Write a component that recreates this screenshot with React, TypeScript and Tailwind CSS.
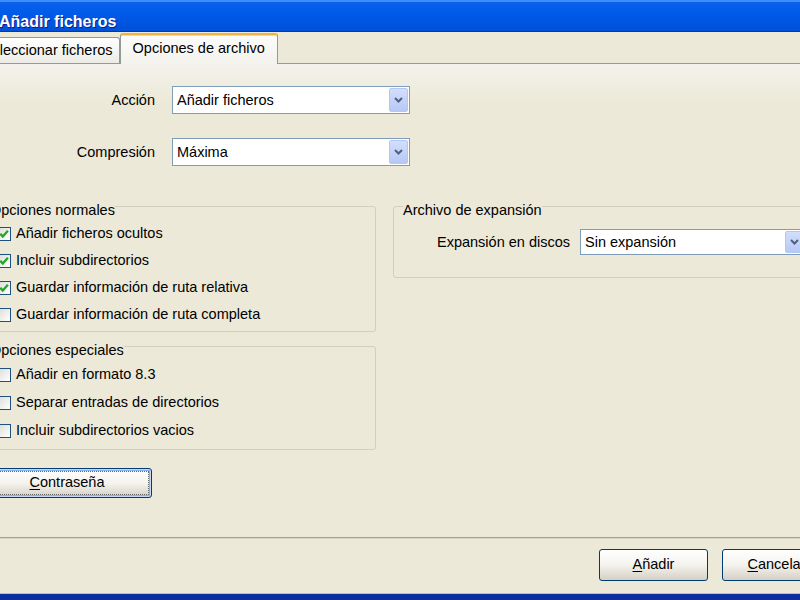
import React from 'react';

function Chevron() {
  return (
    <svg width="9" height="6" viewBox="0 0 9 6">
      <path d="M1 1l3.5 3.5L8 1" fill="none" stroke="#4D6185" strokeWidth="2" />
    </svg>
  );
}

function Dropdown({ value, className }: { value: string; className: string }) {
  return (
    <div className={`flex items-stretch bg-white border border-[#7F9DB9] p-px ${className}`}>
      <span className="flex-1 flex items-center pl-[3px] pt-px whitespace-nowrap">{value}</span>
      <span className="w-[19px] flex items-center justify-center rounded-[2px] border border-[#B3C7F5] bg-linear-to-b from-[#D3DEFB] to-[#B6C8F6]">
        <Chevron />
      </span>
    </div>
  );
}

function Check({ label, checked, h }: { label: string; checked?: boolean; h: string }) {
  return (
    <div className={`flex items-center ${h}`}>
      <span className="w-[14px] h-[14px] flex items-center justify-center border border-[#1C5180] bg-linear-to-br from-[#DCDCD7] to-white">
        {checked && (
          <svg width="12" height="12" viewBox="0 0 12 12">
            <path d="M2.3 5.8l2.5 2.7L9.9 2.8" fill="none" stroke="#22A822" strokeWidth="2.3" />
          </svg>
        )}
      </span>
      <span className="ml-[5px] whitespace-nowrap">{label}</span>
    </div>
  );
}

function Group({ legend, className, children }: { legend: string; className: string; children: React.ReactNode }) {
  return (
    <fieldset className={`border border-[#D0D0BF] rounded-[3px] pl-[9px] ${className}`}>
      <legend className="pt-[8px] leading-[16px] px-0 whitespace-nowrap">{legend}</legend>
      {children}
    </fieldset>
  );
}

function XpButton({ first, rest, className }: { first: string; rest: string; className: string }) {
  return (
    <div
      className={`flex items-center justify-center rounded-[3px] border border-[#003C74] bg-linear-to-b from-white via-[#F4F3EE] to-[#D6D0C5] ${className}`}
    >
      <span>
        <span className="underline underline-offset-2">{first}</span>
        {rest}
      </span>
    </div>
  );
}

export default function App() {
  return (
    <div className="w-[800px] h-[600px] overflow-hidden flex flex-col bg-[#ECE9D8] text-black text-[14.5px] font-['Liberation_Sans',Arial,sans-serif]">
      {/* Title bar */}
      <div className="h-[32px] shrink-0 pt-[10px] leading-[20px] border-t-2 border-t-[#3D8EF8] border-b border-b-[#0038B8] bg-linear-to-b from-[#0A62EE] via-[#0058E6] to-[#0050D8]">
        <span className="-ml-px text-[16px] font-bold text-white [text-shadow:1px_1px_0_#0A1E8C]">Añadir ficheros</span>
      </div>

      {/* Tabs */}
      <div className="h-[32px] shrink-0 flex items-end border-b border-[#919B9C]">
        <div className="-ml-[25px] h-[26px] flex items-center px-[6px] pt-px rounded-t-[3px] border border-b-0 border-[#919B9C] bg-linear-to-b from-white to-[#ECEBE5] whitespace-nowrap">
          Seleccionar ficheros
        </div>
        <div className="-mb-px h-[31px] flex items-center px-[12px] pb-px rounded-t-[3px] border border-b-0 border-[#919B9C] border-t-2 border-t-[#F0B244] shadow-[inset_0_1px_0_#FFD67A] bg-linear-to-b from-[#FCFCFB] to-[#F3F2EC] whitespace-nowrap">
          Opciones de archivo
        </div>
      </div>

      {/* Pane */}
      <div className="flex-1 flex flex-col pt-[22px] border-b border-[#A3A192] bg-linear-to-b from-[#F3F2EC] to-[#ECE9D8] to-[40px]">
        <div className="flex items-center h-[28px]">
          <span className="w-[155px] text-right pt-px">Acción</span>
          <Dropdown value="Añadir ficheros" className="ml-[17px] w-[238px] h-[28px]" />
        </div>
        <div className="flex items-center h-[28px] mt-[24px]">
          <span className="w-[155px] text-right pt-px">Compresión</span>
          <Dropdown value="Máxima" className="ml-[17px] w-[238px] h-[28px]" />
        </div>

        <div className="flex items-start mt-[28px] -ml-[20px]">
          <div className="w-[396px] shrink-0 flex flex-col">
            <Group legend="Opciones normales" className="pt-[2px] pb-[3px]">
              <div className="ml-[7px]">
                <Check h="h-[27px]" checked label="Añadir ficheros ocultos" />
                <Check h="h-[27px]" checked label="Incluir subdirectorios" />
                <Check h="h-[27px]" checked label="Guardar información de ruta relativa" />
                <Check h="h-[27px]" label="Guardar información de ruta completa" />
              </div>
            </Group>
            <Group legend="Opciones especiales" className="mt-[2px] pt-[3px] pb-[4px]">
              <div className="ml-[7px]">
                <Check h="h-[28px]" label="Añadir en formato 8.3" />
                <Check h="h-[28px]" label="Separar entradas de directorios" />
                <Check h="h-[28px]" label="Incluir subdirectorios vacios" />
              </div>
            </Group>
            <XpButton
              first="C"
              rest="ontraseña"
              className="mt-[18px] ml-[2px] w-[170px] h-[30px] shadow-[inset_0_0_0_1px_#C4D8F8,inset_0_0_0_2px_#8CAEE8] outline outline-1 outline-dotted outline-[#666] -outline-offset-4"
            />
          </div>

          <Group legend="Archivo de expansión" className="ml-[17px] w-[420px] shrink-0 pt-[11px] pb-[22px]">
            <div className="flex items-center h-[26px]">
              <span className="ml-[34px] whitespace-nowrap pt-px">Expansión en discos</span>
              <Dropdown value="Sin expansión" className="ml-[10px] w-[226px] h-[26px] shrink-0" />
            </div>
          </Group>
        </div>
      </div>

      {/* Footer buttons */}
      <div className="h-[55px] shrink-0 flex justify-end items-start gap-[14px] pt-[11px] -mr-[31px] shadow-[inset_0_1px_0_#D6D3C6]">
        <XpButton first="A" rest="ñadir" className="w-[109px] h-[32px]" />
        <XpButton first="C" rest="ancelar" className="w-[109px] h-[32px]" />
      </div>

      {/* Window frame bottom */}
      <div className="h-[7px] shrink-0 border-t border-[#A9C1F1] bg-[#0C2E9F]" />
    </div>
  );
}
